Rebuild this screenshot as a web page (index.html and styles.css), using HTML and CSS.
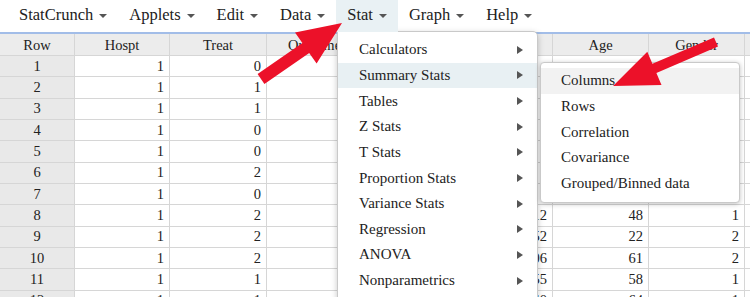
FILE: index.html
```html
<!DOCTYPE html>
<html>
<head>
<meta charset="utf-8">
<link rel="stylesheet" href="styles.css">
</head>
<body>
<div class="page">
  <nav class="menubar">
    <div class="menu-item">StatCrunch <span class="caret"></span></div>
    <div class="menu-item">Applets <span class="caret"></span></div>
    <div class="menu-item">Edit <span class="caret"></span></div>
    <div class="menu-item">Data <span class="caret"></span></div>
    <div class="menu-item active">Stat <span class="caret"></span></div>
    <div class="menu-item">Graph <span class="caret"></span></div>
    <div class="menu-item">Help <span class="caret"></span></div>
  </nav>
  <div class="sheet">
    <div class="grid">
      <div class="hd rowcol">Row</div><div class="hd">Hospt</div><div class="hd">Treat</div><div class="hd">Outcome</div><div class="hd"></div><div class="hd"></div><div class="hd">Age</div><div class="hd">Gender</div><div class="hd"></div>

      <div class="rn">1</div><div class="c">1</div><div class="c">0</div><div class="c"></div><div class="c"></div><div class="c"></div><div class="c"></div><div class="c"></div><div class="c e"></div>
      <div class="rn">2</div><div class="c">1</div><div class="c">1</div><div class="c"></div><div class="c"></div><div class="c"></div><div class="c"></div><div class="c"></div><div class="c e"></div>
      <div class="rn">3</div><div class="c">1</div><div class="c">1</div><div class="c"></div><div class="c"></div><div class="c"></div><div class="c"></div><div class="c"></div><div class="c e"></div>
      <div class="rn">4</div><div class="c">1</div><div class="c">0</div><div class="c"></div><div class="c"></div><div class="c"></div><div class="c"></div><div class="c"></div><div class="c e"></div>
      <div class="rn">5</div><div class="c">1</div><div class="c">0</div><div class="c"></div><div class="c"></div><div class="c"></div><div class="c"></div><div class="c"></div><div class="c e"></div>
      <div class="rn">6</div><div class="c">1</div><div class="c">2</div><div class="c"></div><div class="c"></div><div class="c"></div><div class="c"></div><div class="c"></div><div class="c e"></div>
      <div class="rn">7</div><div class="c">1</div><div class="c">0</div><div class="c"></div><div class="c"></div><div class="c"></div><div class="c"></div><div class="c"></div><div class="c e"></div>
      <div class="rn">8</div><div class="c">1</div><div class="c">2</div><div class="c"></div><div class="c"></div><div class="c">112</div><div class="c">48</div><div class="c">1</div><div class="c e"></div>
      <div class="rn">9</div><div class="c">1</div><div class="c">2</div><div class="c"></div><div class="c"></div><div class="c">152</div><div class="c">22</div><div class="c">2</div><div class="c e"></div>
      <div class="rn">10</div><div class="c">1</div><div class="c">2</div><div class="c"></div><div class="c"></div><div class="c">106</div><div class="c">61</div><div class="c">2</div><div class="c e"></div>
      <div class="rn">11</div><div class="c">1</div><div class="c">1</div><div class="c"></div><div class="c"></div><div class="c">155</div><div class="c">58</div><div class="c">1</div><div class="c e"></div>
      <div class="rn">12</div><div class="c">1</div><div class="c">1</div><div class="c"></div><div class="c"></div><div class="c">140</div><div class="c">64</div><div class="c">1</div><div class="c e"></div>
    </div>
  </div>

  <div class="dropdown">
    <div class="dd-item">Calculators <span class="tri"></span></div>
    <div class="dd-item hl">Summary Stats <span class="tri"></span></div>
    <div class="dd-item">Tables <span class="tri"></span></div>
    <div class="dd-item">Z Stats <span class="tri"></span></div>
    <div class="dd-item">T Stats <span class="tri"></span></div>
    <div class="dd-item">Proportion Stats <span class="tri"></span></div>
    <div class="dd-item">Variance Stats <span class="tri"></span></div>
    <div class="dd-item">Regression <span class="tri"></span></div>
    <div class="dd-item">ANOVA <span class="tri"></span></div>
    <div class="dd-item">Nonparametrics <span class="tri"></span></div>
  </div>

  <div class="submenu">
    <div class="sm-item hl2">Columns</div>
    <div class="sm-item">Rows</div>
    <div class="sm-item">Correlation</div>
    <div class="sm-item">Covariance</div>
    <div class="sm-item">Grouped/Binned data</div>
  </div>

  <svg class="arrows" width="750" height="297" viewBox="0 0 750 297">
    <polygon points="257.6,74.1 302.4,43.1 295,32.4 342,23 316.6,63.6 309.2,52.9 264.4,83.9" fill="#ec1129"/>
    <polygon points="714,37.4 652.4,63.7 647.3,51.7 613,86 661.5,84.9 656.4,72.9 718,46.6" fill="#ec1129"/>
  </svg>
</div>
</body>
</html>
```

FILE: styles.css
```css
* { box-sizing: border-box; }
html, body { margin: 0; padding: 0; background: #fff; }
body {
  font-family: "Liberation Serif", "Times New Roman", serif;
  color: #222;
  width: 750px;
  height: 297px;
  overflow: hidden;
}
.page { position: relative; width: 750px; height: 297px; overflow: hidden; }

.menubar {
  display: flex;
  height: 32px;
  padding-left: 8px;
  font-size: 16.5px;
  background: #fff;
}
.menu-item {
  display: flex;
  align-items: center;
  gap: 6px;
  padding: 0 11px 2px;
  height: 32px;
  color: #222;
}
.menu-item.active {
  background: #e9f1f4;
  position: relative;
  z-index: 3;
}
.caret {
  width: 0; height: 0;
  border-left: 4px solid transparent;
  border-right: 4px solid transparent;
  border-top: 4.5px solid #555;
  margin-top: 2px;
}

.sheet {
  border-top: 2px solid #a2bde8;
  overflow: hidden;
  height: 265px;
}
.grid {
  display: grid;
  grid-template-columns: 75px 95px 97px 96px 95px 95px 96px 96px 100px;
  grid-template-rows: 22px repeat(12, 21.33px);
  width: 845px;
  font-size: 14.5px;
}
.grid > div {
  border-right: 1px solid #d6d6d6;
  border-bottom: 1px solid #d6d6d6;
  display: flex;
  align-items: center;
  white-space: nowrap;
  overflow: hidden;
}
.hd {
  background: #ececec;
  justify-content: center;
  padding-top: 1px;
}
.rn {
  background: #e9e9e9;
  justify-content: center;
}
.c {
  background: #fff;
  justify-content: flex-end;
  padding-right: 5px;
}

.dropdown {
  position: absolute;
  left: 337px;
  top: 31px;
  width: 201px;
  height: 280px;
  background: #fff;
  border: 1px solid #c9c9c9;
  border-radius: 0 5px 0 0;
  box-shadow: 0 2px 6px rgba(0,0,0,0.22);
  padding-top: 5px;
  z-index: 2;
  font-size: 15px;
}
.dd-item {
  height: 25.65px;
  display: flex;
  align-items: center;
  justify-content: space-between;
  padding: 0 14px 0 21px;
}
.dd-item.hl { background: #e8f0f3; }
.tri {
  width: 0; height: 0;
  border-top: 4.5px solid transparent;
  border-bottom: 4.5px solid transparent;
  border-left: 6px solid #555;
}

.submenu {
  position: absolute;
  left: 540px;
  top: 62px;
  width: 200px;
  height: 141px;
  background: #fff;
  border: 1px solid #c9c9c9;
  border-radius: 4px;
  box-shadow: 0 1px 5px rgba(0,0,0,0.25);
  padding-top: 5px;
  z-index: 4;
  font-size: 15px;
}
.sm-item {
  height: 25.7px;
  display: flex;
  align-items: center;
  padding-left: 20px;
}
.sm-item.hl2 { background: #f2f2f2; }

.arrows {
  position: absolute;
  left: 0;
  top: 0;
  z-index: 10;
  pointer-events: none;
}
```
